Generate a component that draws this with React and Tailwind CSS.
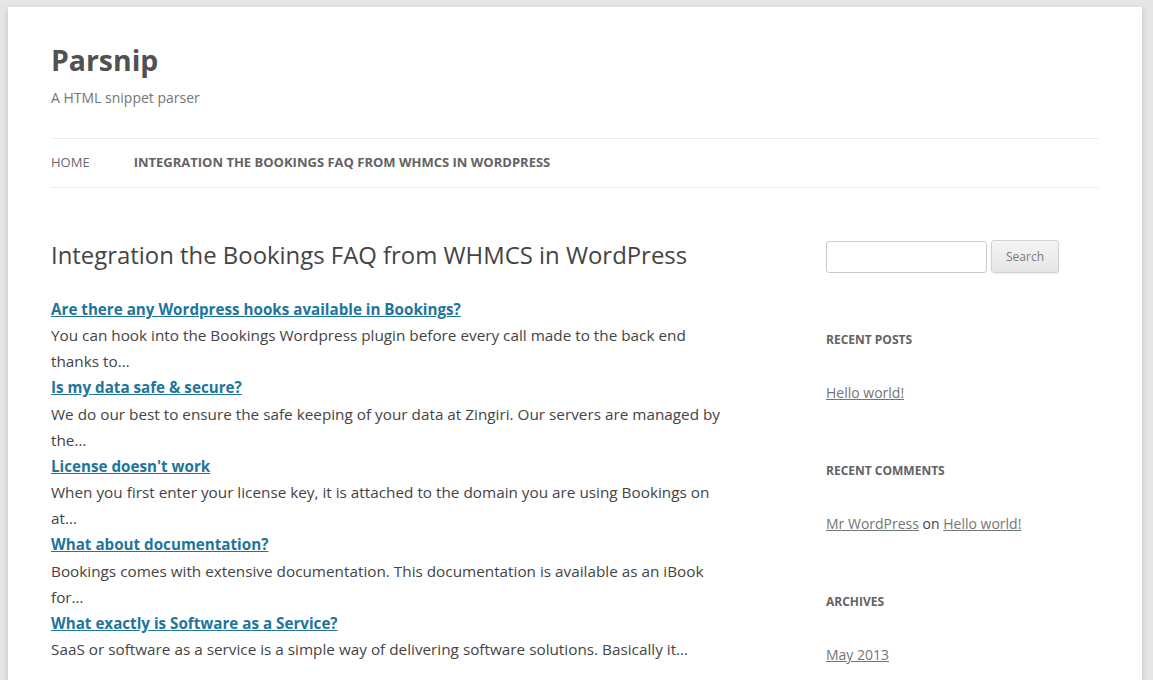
const faqs = [
  {
    q: 'Are there any Wordpress hooks available in Bookings?',
    a: 'You can hook into the Bookings Wordpress plugin before every call made to the back end thanks to…',
  },
  {
    q: 'Is my data safe & secure?',
    a: 'We do our best to ensure the safe keeping of your data at Zingiri. Our servers are managed by the…',
  },
  {
    q: "License doesn't work",
    a: 'When you first enter your license key, it is attached to the domain you are using Bookings on at…',
  },
  {
    q: 'What about documentation?',
    a: 'Bookings comes with extensive documentation. This documentation is available as an iBook for…',
  },
  {
    q: 'What exactly is Software as a Service?',
    a: 'SaaS or software as a service is a simple way of delivering software solutions. Basically it…',
  },
];

const Widget = ({ title, children }) => (
  <div className="mb-[54px]">
    <h3 className="text-[12px] font-bold uppercase leading-[24px] text-[#636363]">{title}</h3>
    <div className="mt-[29px] text-[14px] leading-[24px] text-[#444]">{children}</div>
  </div>
);

export default function App() {
  return (
    <div className="h-[680px] overflow-hidden bg-[#e6e6e6] pl-[8px] pt-[7px] font-['Open_Sans',sans-serif]">
      <div className="min-h-[673px] w-[1134px] bg-white px-[43px] pt-[29px] shadow-[0_2px_6px_rgba(100,100,100,0.3)]">
        <header>
          <h1 className="text-[28.4px] font-bold leading-[48px] text-[#515151]">Parsnip</h1>
          <p className="mt-[2px] text-[14px] leading-[24px] text-[#757575]">A HTML snippet parser</p>
          <nav className="mt-[28px] flex h-[50px] items-center border-y border-[#ededed] text-[13px] uppercase">
            <a className="mr-[44px] text-[#6a6a6a]">Home</a>
            <a className="font-bold text-[#636363]">Integration the Bookings FAQ from WHMCS in WordPress</a>
          </nav>
        </header>

        <div className="mt-[49px] flex justify-between">
          <main className="w-[682px]">
            <h1 className="text-[23.9px] leading-[36px] text-[#444]">
              Integration the Bookings FAQ from WHMCS in WordPress
            </h1>
            <div className="mt-[23px] text-[15.3px] leading-[26.15px] text-[#444]">
              {faqs.map((f) => (
                <div key={f.q}>
                  <a className="text-[15.2px] font-bold text-[#21759b] underline">{f.q}</a>
                  <p>{f.a}</p>
                </div>
              ))}
            </div>
          </main>

          <aside className="w-[273px]">
            <div className="mb-[55px] mt-[3px] flex items-center gap-[4px]">
              <input className="h-[32px] w-[161px] rounded-[3px] border border-[#ccc] bg-white px-2 text-[12px]" />
              <button className="h-[33px] w-[68px] rounded-[3px] border border-[#d2d2d2] bg-gradient-to-b from-[#f4f4f4] to-[#e6e6e6] text-[12px] text-[#7c7c7c] shadow-[0_1px_2px_rgba(64,64,64,0.1)]">
                Search
              </button>
            </div>
            <Widget title="Recent Posts">
              <a className="text-[#757575] underline">Hello world!</a>
            </Widget>
            <Widget title="Recent Comments">
              <a className="text-[#757575] underline">Mr WordPress</a> on{' '}
              <a className="text-[#757575] underline">Hello world!</a>
            </Widget>
            <Widget title="Archives">
              <a className="text-[#757575] underline">May 2013</a>
            </Widget>
          </aside>
        </div>
      </div>
    </div>
  );
}
